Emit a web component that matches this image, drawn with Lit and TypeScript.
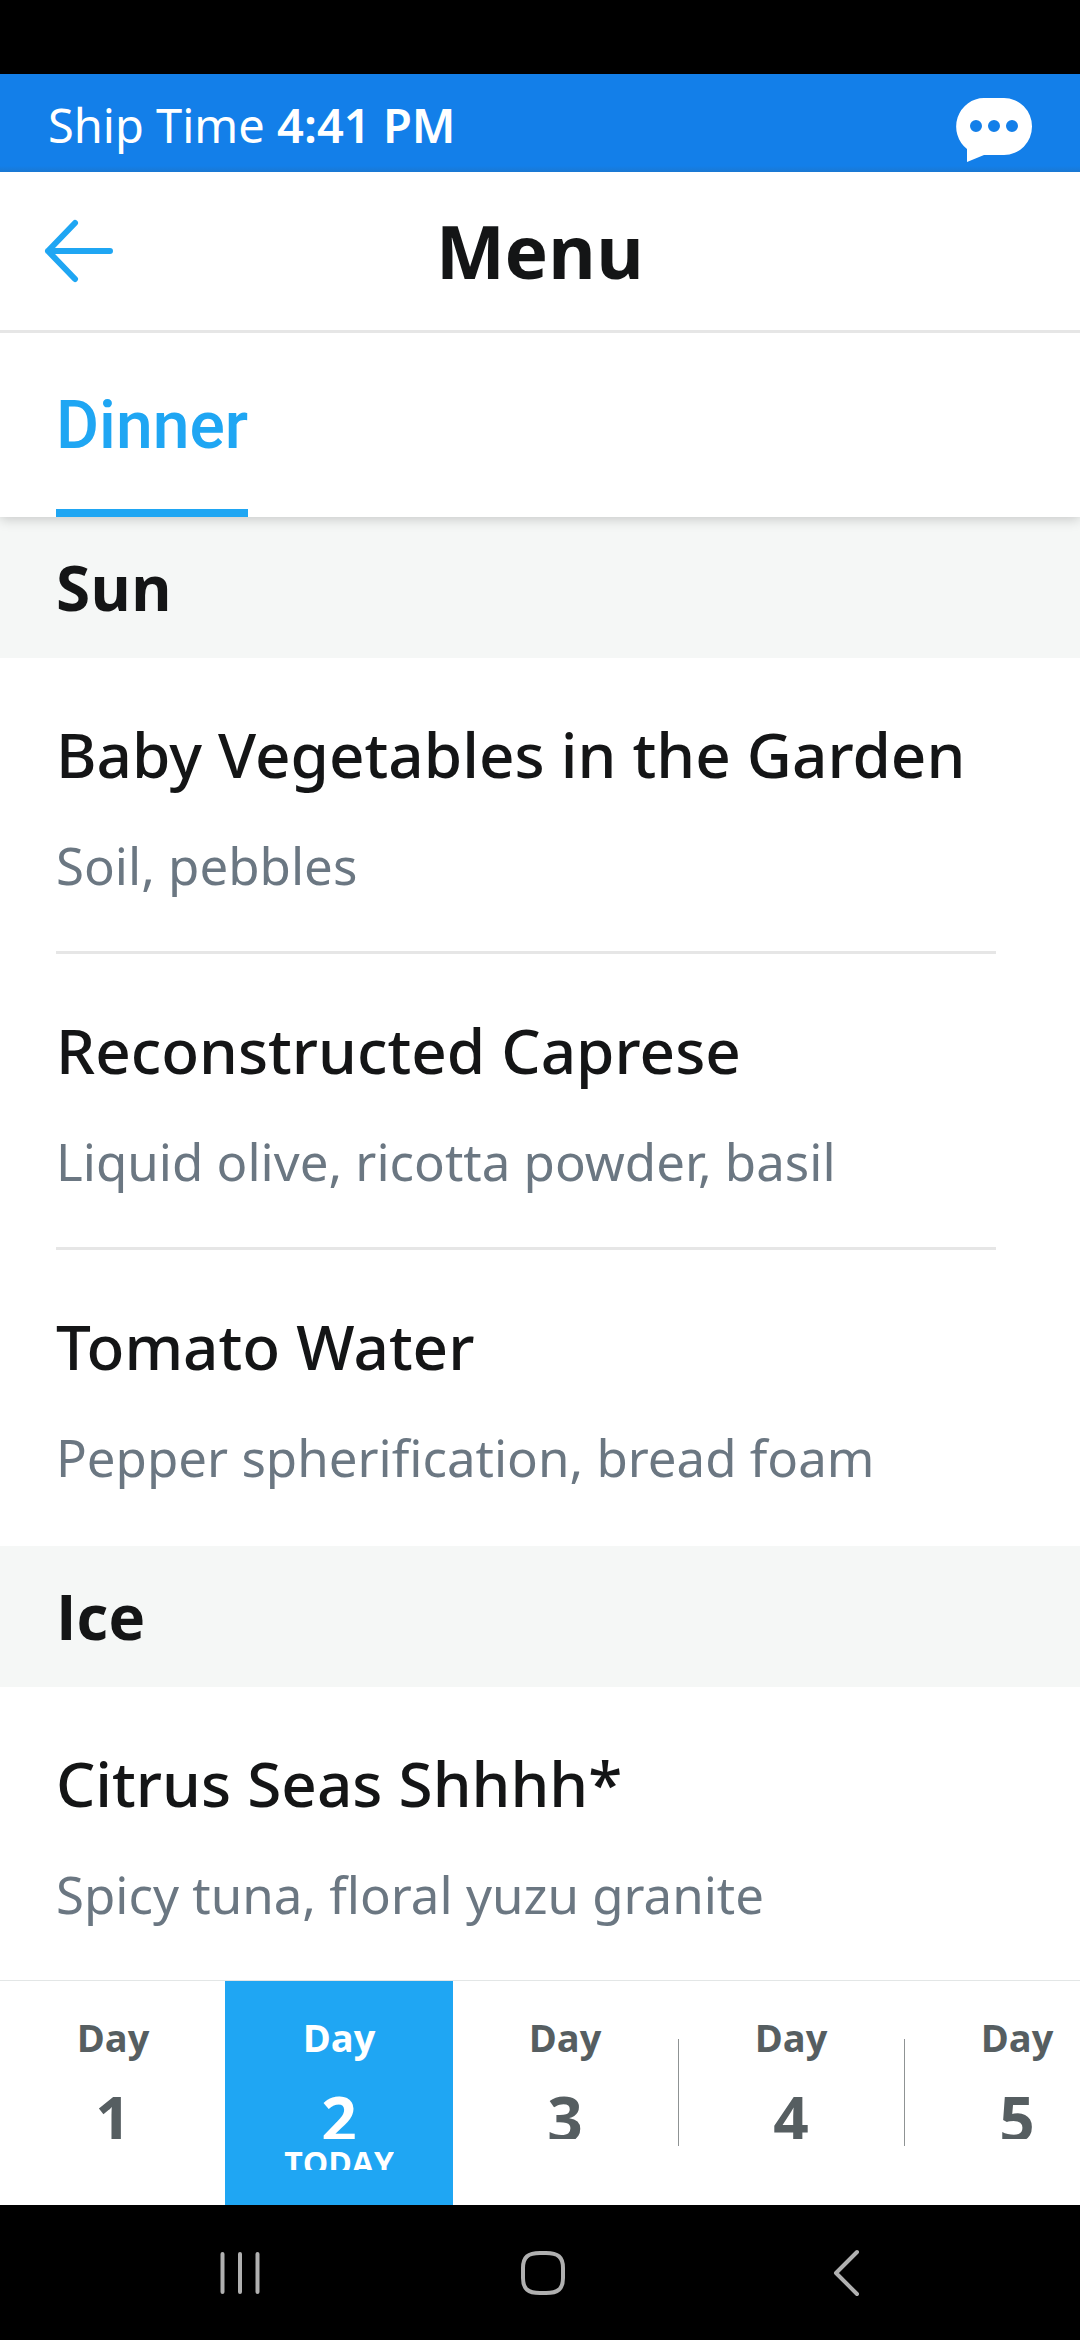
import { LitElement, html, css } from "lit";
import { customElement, property, state } from "lit/decorators.js";
import { classMap } from "lit/directives/class-map.js";

interface Dish {
  name: string;
  detail: string;
}

interface Course {
  title: string;
  dishes: Dish[];
}

const COURSES: Course[] = [
  {
    title: "Sun",
    dishes: [
      { name: "Baby Vegetables in the Garden", detail: "Soil, pebbles" },
      { name: "Reconstructed Caprese", detail: "Liquid olive, ricotta powder, basil" },
      { name: "Tomato Water", detail: "Pepper spherification, bread foam" },
    ],
  },
  {
    title: "Ice",
    dishes: [{ name: "Citrus Seas Shhhh*", detail: "Spicy tuna, floral yuzu granite" }],
  },
];

@customElement("ship-bar")
class ShipBar extends LitElement {
  @property() time = "";

  static styles = css`
    :host {
      display: flex;
      align-items: center;
      justify-content: space-between;
      height: 98px;
      padding: 0 48px;
      background: linear-gradient(to bottom, #137fe9 92px, #1a78d2);
      color: #fff;
    }
    .clock {
      margin: 0;
      padding-top: 4px;
      font-size: 47px;
      line-height: 60px;
      white-space: nowrap;
    }
    .value {
      font-weight: 600;
    }
    .chat {
      display: block;
      padding: 0;
      border: 0;
      background: none;
      color: inherit;
    }
    .icon {
      display: block;
    }
  `;

  render() {
    return html`
      <p class="clock">Ship Time <span class="value">${this.time}</span></p>
      <button class="chat" type="button" aria-label="Chat">
        <svg class="icon" width="76" height="78" viewBox="0 0 76 78" aria-hidden="true">
          <path
            fill="currentColor"
            fill-rule="evenodd"
            d="M28 14H48A28 28.500 0 0 1 48 71H28L11 78V65A28 28.500 0 0 1 28 14Z
               M20 36a6 6 0 1 0 0 12a6 6 0 1 0 0-12Z
               M38 36a6 6 0 1 0 0 12a6 6 0 1 0 0-12Z
               M56 36a6 6 0 1 0 0 12a6 6 0 1 0 0-12Z"
          />
        </svg>
      </button>
    `;
  }
}

@customElement("menu-course")
class MenuCourse extends LitElement {
  @property({ attribute: false }) course!: Course;

  static styles = css`
    :host {
      display: block;
    }
    .title {
      margin: 0;
      padding: 34px 56px 35px;
      background: #f5f7f6;
      font-family: "Open Sans", sans-serif;
      font-size: 62px;
      font-weight: 700;
      line-height: 72px;
    }
    .dishes {
      margin: 0;
      padding: 0 84px 0 56px;
      list-style: none;
    }
    .dish {
      padding: 60px 0 54px;
      border-bottom: 3px solid #e6e6e6;
    }
    .dish:last-child {
      border-color: transparent;
    }
    .name {
      margin: 0 0 43px;
      font-size: 62px;
      font-weight: 500;
      line-height: 72px;
      white-space: nowrap;
    }
    .detail {
      margin: 0;
      color: #6b7782;
      font-size: 51px;
      line-height: 64px;
      white-space: nowrap;
    }
  `;

  render() {
    return html`
      <h2 class="title">${this.course.title}</h2>
      <ul class="dishes">
        ${this.course.dishes.map(
          (dish) => html`
            <li class="dish">
              <h3 class="name">${dish.name}</h3>
              <p class="detail">${dish.detail}</p>
            </li>
          `,
        )}
      </ul>
    `;
  }
}

@customElement("day-picker")
class DayPicker extends LitElement {
  @property({ type: Number }) today = 2;
  @state() private selected = 2;

  static styles = css`
    :host {
      display: flex;
      height: 224px;
      overflow: hidden;
      border-top: 1px solid #e3e6e6;
      background: #fff;
    }
    .day {
      display: flex;
      flex: 0 0 226px;
      flex-direction: column;
      align-items: center;
      box-sizing: border-box;
      padding: 32px 0 0;
      border: 0;
      background: none;
      color: #565e61;
      font-family: "Open Sans", sans-serif;
      font-weight: 700;
    }
    .divided {
      background: linear-gradient(#8f9394, #8f9394) left 58px / 1px 107px no-repeat;
    }
    .selected {
      flex-basis: 228px;
      margin: -1px -1px 0;
      padding-top: 33px;
      background: #1fa6f3;
      color: #fff;
    }
    .label {
      font-size: 38px;
      line-height: 48px;
    }
    .number {
      height: 51px;
      margin-top: 27px;
      overflow: hidden;
      font-size: 62px;
      line-height: 60px;
    }
    .today {
      height: 25px;
      margin-top: 6px;
      overflow: hidden;
      font-size: 32px;
      line-height: 36px;
    }
  `;

  render() {
    return [1, 2, 3, 4, 5].map(
      (day) => html`
        <button
          type="button"
          class=${classMap({
            day: true,
            selected: day === this.selected,
            divided: day > 1 && day !== this.selected && day - 1 !== this.selected,
          })}
          aria-pressed=${day === this.selected ? "true" : "false"}
          @click=${() => (this.selected = day)}
        >
          <span class="label">Day</span>
          <span class="number">${day}</span>
          ${day === this.today ? html`<span class="today">TODAY</span>` : null}
        </button>
      `,
    );
  }
}

@customElement("system-nav")
class SystemNav extends LitElement {
  static styles = css`
    :host {
      display: grid;
      grid-template-columns: repeat(3, 1fr);
      height: 135px;
      padding: 0 83px 0 89px;
      background: #000;
    }
    .key {
      display: flex;
      align-items: center;
      justify-content: center;
      padding: 0;
      border: 0;
      background: none;
      color: #b0b0b0;
    }
    .icon {
      fill: none;
      stroke: currentColor;
      stroke-width: 4;
      stroke-linecap: round;
      stroke-linejoin: round;
    }
  `;

  render() {
    return html`
      <button class="key" type="button" aria-label="Recent apps">
        <svg class="icon" width="48" height="48" viewBox="0 0 48 48" aria-hidden="true">
          <path d="M6.500 5V43M24 5V43M41.500 5V43" />
        </svg>
      </button>
      <button class="key" type="button" aria-label="Home">
        <svg class="icon" width="48" height="48" viewBox="0 0 48 48" aria-hidden="true">
          <path
            d="M24 4H27C39 4 44 8 44 19V29C44 40 39 44 27 44H21C9 44 4 40 4 29V19C4 8 9 4 21 4Z"
          />
        </svg>
      </button>
      <button class="key" type="button" aria-label="Back">
        <svg class="icon" width="48" height="48" viewBox="0 0 48 48" aria-hidden="true">
          <path d="M35 3L14 24L35 45" />
        </svg>
      </button>
    `;
  }
}

@customElement("app-root")
class AppRoot extends LitElement {
  static styles = css`
    :host {
      display: flex;
      flex-direction: column;
      height: 100vh;
      overflow: hidden;
      background: #fff;
      color: #141516;
      font-family: "Noto Sans", "Open Sans", sans-serif;
    }
    .status {
      flex: none;
      height: 74px;
      background: #000;
    }
    .header {
      display: grid;
      flex: none;
      grid-template-columns: 1fr auto 1fr;
      align-items: center;
      height: 158px;
      padding: 0 42px;
      border-bottom: 3px solid #e6e6e6;
    }
    .back {
      justify-self: start;
      padding: 0;
      border: 0;
      background: none;
      color: #1fa6f3;
    }
    .arrow {
      display: block;
      fill: none;
      stroke: currentColor;
      stroke-width: 6;
      stroke-linecap: round;
      stroke-linejoin: round;
    }
    .heading {
      margin: 0;
      font-family: "Open Sans", sans-serif;
      font-size: 73px;
      font-weight: 700;
      line-height: 90px;
    }
    .tabs {
      display: flex;
      flex: none;
      padding: 0 56px;
      background: #fff;
      box-shadow: 0 2px 12px rgba(0, 0, 0, 0.2);
      clip-path: inset(0 0 -24px 0);
      z-index: 1;
    }
    .tab {
      padding: 53px 0 43px;
      border: 0;
      border-bottom: 8px solid #1fa6f3;
      background: none;
      color: #1fa6f3;
      font-family: Roboto, sans-serif;
      font-size: 66px;
      font-weight: 500;
      line-height: 80px;
    }
    .list {
      flex: 1;
      min-height: 0;
      overflow: hidden;
    }
    .fixed {
      flex: none;
    }
  `;

  render() {
    return html`
      <div class="status"></div>
      <ship-bar class="fixed" time="4:41 PM"></ship-bar>
      <header class="header">
        <button class="back" type="button" aria-label="Back">
          <svg class="arrow" width="74" height="68" viewBox="0 0 74 68" aria-hidden="true">
            <path d="M33 6L6 34L33 62M6 34H68" />
          </svg>
        </button>
        <h1 class="heading">Menu</h1>
      </header>
      <div class="tabs" role="tablist">
        <button class="tab" type="button" role="tab" aria-selected="true">Dinner</button>
      </div>
      <main class="list">
        ${COURSES.map((course) => html`<menu-course .course=${course}></menu-course>`)}
      </main>
      <day-picker class="fixed"></day-picker>
      <system-nav class="fixed"></system-nav>
    `;
  }
}
